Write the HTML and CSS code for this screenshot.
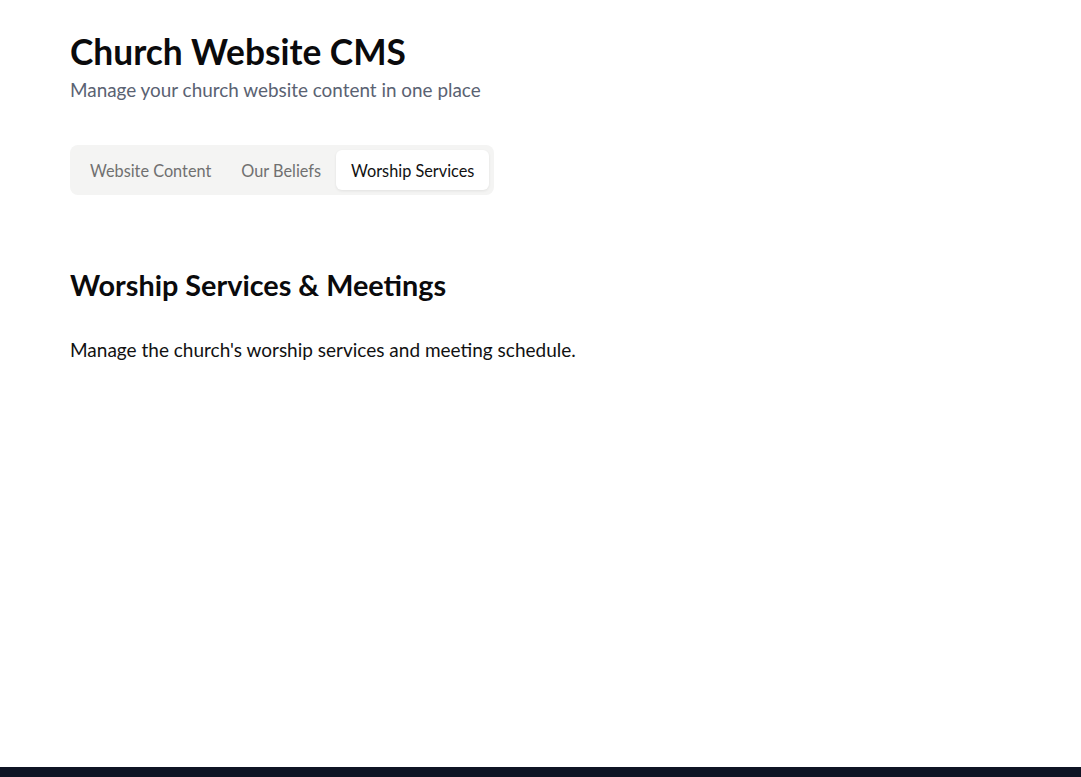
FILE: index.html
```html
<!DOCTYPE html>
<html lang="en">
<head>
<meta charset="utf-8">
<title>Church Website CMS</title>
<link rel="stylesheet" href="styles.css">
</head>
<body>
<div class="page">
  <main class="main">
    <header class="header">
      <h1 class="title">Church Website CMS</h1>
      <p class="subtitle">Manage your church website content in one place</p>
    </header>
    <nav class="tabs">
      <button class="tab">Website Content</button>
      <button class="tab">Our Beliefs</button>
      <button class="tab tab-active">Worship Services</button>
    </nav>
    <section class="panel">
      <h2 class="panel-title">Worship Services &amp; Meetings</h2>
      <p class="panel-text">Manage the church's worship services and meeting schedule.</p>
    </section>
  </main>
  <footer class="footer"></footer>
</div>
</body>
</html>
```
FILE: styles.css
```css
* { box-sizing: border-box; }
html, body { margin: 0; padding: 0; }
body {
  font-family: "Lato", "Liberation Sans", sans-serif;
  color: #0e0e10;
  background: #ffffff;
}
.page {
  display: flex;
  flex-direction: column;
  min-height: 100vh;
}
.main {
  flex: 1;
  padding: 27px 70px 0 70px;
}
.title {
  margin: 0;
  font-size: 35.3px;
  font-weight: 700;
  line-height: 50px;
  color: #0a0a0c;
}
.subtitle {
  margin: 0;
  font-size: 18.9px;
  line-height: 26px;
  color: #5a6272;
}
.tabs {
  display: inline-flex;
  margin-top: 42px;
  padding: 5px;
  background: #f4f4f3;
  border-radius: 8px;
}
.tab {
  font-family: inherit;
  font-size: 16.3px;
  border: 0;
  background: transparent;
  color: #707070;
  padding: 0 15px;
  height: 40px;
  border-radius: 6px;
  cursor: pointer;
}
.tab-active {
  background: #ffffff;
  color: #111111;
  box-shadow: 0 1px 3px rgba(0,0,0,0.08);
}
.panel {
  margin-top: 72px;
}
.panel-title {
  margin: 0;
  font-size: 28.8px;
  font-weight: 700;
  line-height: 36px;
  color: #0a0a0c;
}
.panel-text {
  margin: 34px 0 0 0;
  font-size: 19px;
  line-height: 26px;
  color: #111111;
}
.footer {
  height: 10px;
  background: #0e1424;
}
```
